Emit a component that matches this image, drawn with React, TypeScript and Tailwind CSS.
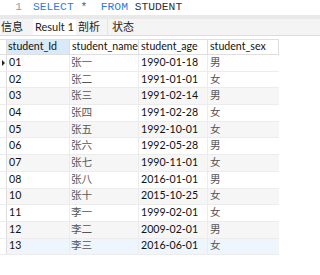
const rows = [
  ["01", "张一", "1990-01-18", "男"],
  ["02", "张二", "1991-01-01", "女"],
  ["03", "张三", "1991-02-14", "男"],
  ["04", "张四", "1991-02-28", "女"],
  ["05", "张五", "1992-10-01", "女"],
  ["06", "张六", "1992-05-28", "男"],
  ["07", "张七", "1990-11-01", "女"],
  ["08", "张八", "2016-01-01", "男"],
  ["10", "张十", "2015-10-25", "女"],
  ["11", "李一", "1999-02-01", "女"],
  ["12", "李二", "2009-02-01", "男"],
  ["13", "李三", "2016-06-01", "女"],
];

const font = "font-['Lato','Noto_Sans_CJK_SC',sans-serif]";

export default function App() {
  return (
    <div className={`w-[320px] h-[275px] bg-white overflow-hidden ${font} text-[10.6px]`}>
      {/* sql editor */}
      <div className="h-[15px] flex items-center bg-white">
        <span className="w-[22px] text-right text-[#9a9a9a] font-['Liberation_Mono',monospace] text-[11.3px]">1</span>
        <span className="ml-[11px] whitespace-pre font-['Liberation_Mono',monospace] text-[11.3px] leading-none">
          <span className="text-[#2f7ae0]">SELECT</span>
          <span className="text-[#555]"> *  </span>
          <span className="text-[#2f7ae0]">FROM</span>
          <span className="text-[#333]"> STUDENT</span>
        </span>
      </div>
      <div className="h-[4px] bg-[#e9e9e9]" />

      {/* tabs */}
      <div className="h-[17px] flex items-stretch bg-[#f4f4f4] border-b border-[#dcdcdc] text-[#222] text-[11px]">
        <div className="w-[33px] pl-[1px] flex items-center">信息</div>
        <div className="w-[43px] bg-white flex items-center justify-center">Result 1</div>
        <div className="w-[32px] pl-[2px] flex items-center border-r border-[#e4e4e4]">剖析</div>
        <div className="w-[30px] pl-[4px] flex items-center">状态</div>
      </div>
      <div className="h-[3px]" />

      {/* grid */}
      <div className="w-[279px]">
        <div className="h-[16px] flex border-y border-[#dedede] text-[#111]">
          <div className="w-[7px] border-r border-[#dedede]" />
          <div className="w-[63px] bg-[#d9e9f8] border-r border-[#dedede] pl-[1px] flex items-center">student_Id</div>
          <div className="w-[69px] border-r border-[#dedede] pl-[2px] flex items-center">student_name</div>
          <div className="w-[69px] border-r border-[#dedede] pl-[2px] flex items-center">student_age</div>
          <div className="w-[71px] border-r border-[#dedede] pl-[2px] flex items-center">student_sex</div>
        </div>
        {rows.map((r, i) => {
          const bg =
            i === rows.length - 1
              ? "bg-[#eef5fd]"
              : i % 2 === 0 && i !== 0
              ? "bg-[#f6f6f6]"
              : "bg-white";
          return (
            <div key={r[0]} className={`h-[16.7px] flex border-b border-[#ececec] ${bg}`}>
              <div className="w-[7px] bg-white border-r border-[#dedede] flex items-center">
                {i === 0 && (
                  <div className="ml-[2px] w-0 h-0 border-y-[3px] border-y-transparent border-l-[3px] border-l-[#222]" />
                )}
              </div>
              <div className="w-[63px] border-r border-[#ececec] pl-[2px] flex items-center text-[#111]">{r[0]}</div>
              <div className="w-[69px] border-r border-[#ececec] pl-[1px] flex items-center text-[#555]">{r[1]}</div>
              <div className="w-[69px] border-r border-[#ececec] pl-[2px] flex items-center text-[#111]">{r[2]}</div>
              <div className="w-[71px] pl-[2px] flex items-center text-[#555]">{r[3]}</div>
            </div>
          );
        })}
      </div>
    </div>
  );
}
